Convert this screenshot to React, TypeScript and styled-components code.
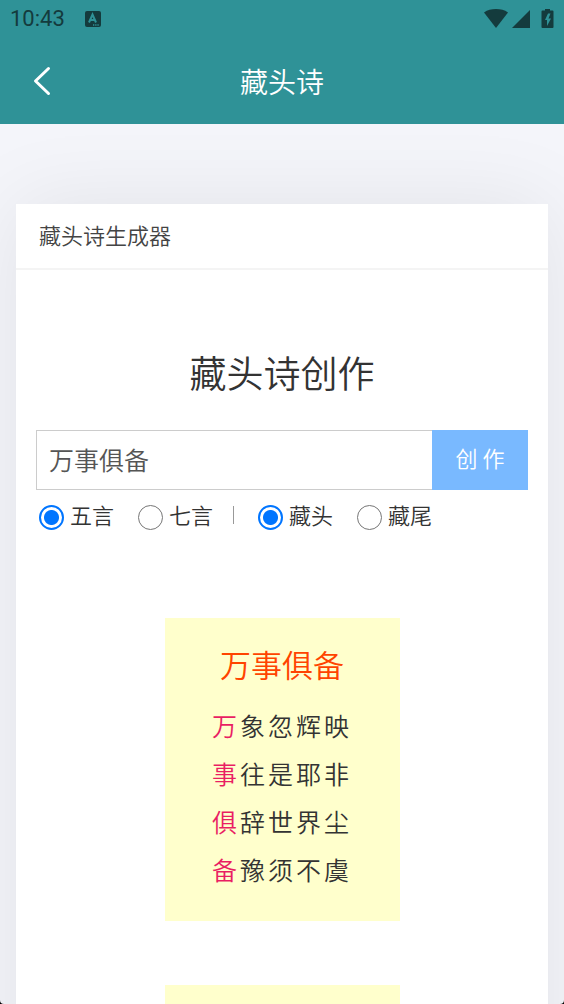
import React, { useState } from "react";
import styled, { createGlobalStyle } from "styled-components";

const GlobalStyle = createGlobalStyle`
  * { box-sizing: border-box; }
  body { margin: 0; background: #000; }
  button, input { font-family: inherit; font-weight: inherit; }
`;

const Screen = styled.div`
  height: 100vh;
  overflow: hidden;
  display: flex;
  flex-direction: column;
  background: #f4f5fa;
  border-radius: 0 0 4px 4px;
  color: #333;
  font-family: "Noto Sans CJK SC", sans-serif;
  font-weight: 350;
`;

const Header = styled.header`
  position: relative;
  z-index: 1;
  flex: none;
  background: #2f9297;
`;

const StatusBar = styled.div`
  display: flex;
  align-items: center;
  height: 38px;
  padding: 0 10px;
  color: #143b3d;
`;

const Clock = styled.span`
  font: 400 22px/38px Roboto, sans-serif;
  -webkit-text-stroke: 0;
  margin-right: 20px;
`;

const StatusIcons = styled.div`
  display: flex;
  align-items: center;
  gap: 4px;
  margin-left: auto;
`;

const NavBar = styled.div`
  display: grid;
  grid-template-columns: 60px 1fr 60px;
  align-items: center;
  height: 86px;
  padding: 0 12px;
`;

const BackButton = styled.button`
  display: flex;
  align-items: center;
  justify-content: center;
  height: 60px;
  padding: 0;
  border: 0;
  background: none;
  color: #fff;
`;

const PageTitle = styled.h1`
  margin: 0;
  font-size: 28px;
  line-height: 40px;
  font-weight: inherit;
  text-align: center;
  color: #fff;
`;

const Card = styled.main`
  flex: none;
  margin: 80px 16px 0;
  background: #fff;
  box-shadow: 0 0 80px rgba(0, 0, 0, 0.08);
`;

const CardHeader = styled.div`
  padding: 14px 23px 18px;
  border-bottom: 2px solid #f4f4f4;
  font-size: 22px;
  line-height: 32px;
  color: #444;
`;

const CardBody = styled.div`
  padding: 74px 20px 64px;
`;

const Heading = styled.h2`
  margin: 0 0 30px;
  font-size: 37px;
  line-height: 56px;
  font-weight: inherit;
  text-align: center;
`;

const Search = styled.div`
  display: flex;
  height: 60px;
`;

const WordInput = styled.input`
  flex: 1;
  min-width: 0;
  padding: 0 12px 2px;
  border: 1px solid #ccc;
  border-right: 0;
  border-radius: 0;
  background: #fff;
  font-size: 25px;
  color: #555;
  outline: none;
`;

const CreateButton = styled.button`
  width: 96px;
  padding: 0 0 6px;
  border: 0;
  background: #79b9ff;
  font-size: 22px;
  color: #fff;
`;

const Options = styled.div`
  display: flex;
  align-items: center;
  height: 50px;
  padding: 0 0 2px 3px;
`;

const Group = styled.div`
  display: flex;
  gap: 24px;
`;

const Divider = styled.span`
  width: 1px;
  height: 18px;
  margin: 2px 24px 0 20px;
  background: #999;
`;

const Option = styled.label`
  display: flex;
  align-items: center;
  gap: 6px;
  font-size: 22px;
  line-height: 32px;
`;

const Radio = styled.input`
  appearance: none;
  width: 25px;
  height: 25px;
  margin: 7px 0 0;
  border: 1px solid #767676;
  border-radius: 50%;
  background: #fff;

  &:checked {
    border: 2px solid #0075ff;
    background: radial-gradient(circle, #0075ff 7px, #fff 8px);
  }
`;

const Poems = styled.div`
  display: flex;
  flex-direction: column;
  align-items: center;
  gap: 64px;
  padding-top: 78px;
`;

const Poem = styled.article`
  width: 235px;
  min-height: 303px;
  padding: 22px 0 26px;
  background: #ffffcc;
  text-align: center;
`;

const PoemTitle = styled.h3`
  margin: 0 0 13px;
  font-size: 31px;
  line-height: 48px;
  font-weight: inherit;
  color: #ff4400;
`;

const Verse = styled.p`
  margin: 0;
  font-size: 25px;
  line-height: 48px;
  letter-spacing: 3px;
`;

const Lead = styled.span`
  color: #e91e63;
`;

const verses = ["万象忽辉映", "事往是耶非", "俱辞世界尘", "备豫须不虞"];

type ChoiceProps = {
  name: string;
  values: string[];
};

function Choice({ name, values }: ChoiceProps) {
  const [selected, setSelected] = useState(values[0]);
  return (
    <Group>
      {values.map((value) => (
        <Option key={value}>
          <Radio
            type="radio"
            name={name}
            value={value}
            checked={selected === value}
            onChange={() => setSelected(value)}
          />
          {value}
        </Option>
      ))}
    </Group>
  );
}

export default function App() {
  const [word, setWord] = useState("万事俱备");
  return (
    <>
      <GlobalStyle />
      <Screen>
        <Header>
          <StatusBar>
            <Clock>10:43</Clock>
            <svg width="16" height="16" viewBox="0 0 16 16">
              <rect width="16" height="16" rx="2" fill="currentColor" />
              <path d="M4 11.500 7.500 3.500l3.500 8M5.500 9h4" fill="none" stroke="#2f9297" strokeWidth="2" />
              <path d="M8 14h1.300M10.200 14h1.300M12.400 14h1.300" stroke="#2f9297" strokeWidth="1.300" />
            </svg>
            <StatusIcons>
              <svg width="24" height="20" viewBox="0 0 24 20">
                <path d="M0 3.500C3.400.8 7.500 0 12 0s8.600.8 12 3.500L12 19z" fill="currentColor" />
              </svg>
              <svg width="18" height="20" viewBox="0 0 18 20">
                <path d="M18 1v18H0z" fill="currentColor" />
              </svg>
              <svg width="20" height="20" viewBox="0 0 20 20">
                <path
                  d="M11 0h5v1.500h2.500q1 0 1 1v15.500q0 1-1 1h-10q-1 0-1-1V2.500q0-1 1-1H11zM14 4.500 11 11h2v6l4-7.500h-2.500l2-5z"
                  fill="currentColor"
                  fillRule="evenodd"
                />
              </svg>
            </StatusIcons>
          </StatusBar>
          <NavBar>
            <BackButton aria-label="返回">
              <svg width="18" height="30" viewBox="0 0 18 30" fill="none" stroke="currentColor" strokeWidth="3" strokeLinecap="round" strokeLinejoin="round">
                <path d="M15.500 2.500 2.500 15l13 12.500" />
              </svg>
            </BackButton>
            <PageTitle>藏头诗</PageTitle>
          </NavBar>
        </Header>
        <Card>
          <CardHeader>藏头诗生成器</CardHeader>
          <CardBody>
            <Heading>藏头诗创作</Heading>
            <Search>
              <WordInput aria-label="藏头内容" value={word} onChange={(e) => setWord(e.target.value)} />
              <CreateButton>创 作</CreateButton>
            </Search>
            <Options>
              <Choice name="length" values={["五言", "七言"]} />
              <Divider />
              <Choice name="position" values={["藏头", "藏尾"]} />
            </Options>
            <Poems>
              <Poem>
                <PoemTitle>万事俱备</PoemTitle>
                {verses.map((verse) => (
                  <Verse key={verse}>
                    <Lead>{verse[0]}</Lead>
                    {verse.slice(1)}
                  </Verse>
                ))}
              </Poem>
              <Poem />
            </Poems>
          </CardBody>
        </Card>
      </Screen>
    </>
  );
}
